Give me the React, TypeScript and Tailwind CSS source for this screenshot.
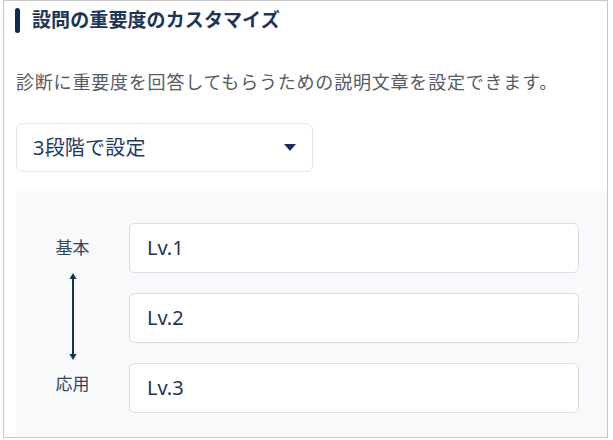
import React from "react";

const font = { fontFamily: '"Noto Sans", "Noto Sans CJK JP", sans-serif' };

function Field({ label }: { label: string }) {
  return (
    <div className="h-[50px] rounded-[6px] border border-[#d9dde3] bg-white flex items-center pl-[17px] text-[20px] text-[#1e3356]">
      {label}
    </div>
  );
}

export default function App() {
  return (
    <div className="w-[613px] h-[440px] bg-white pl-[3px]" style={font}>
      <div className="w-[605px] h-[438px] border border-[#c8c8c8] pl-[12px] flex flex-col">
        <div className="flex items-center mt-[6px] h-[26px]">
          <div className="w-[5px] h-[25px] rounded-full bg-[#0f2a55] -ml-[1px]" />
          <div className="ml-[12px] text-[19px] font-bold text-[#1d3557] tracking-[0.1px] leading-none">
            設問の重要度のカスタマイズ
          </div>
        </div>
        <div className="mt-[40px] text-[18px] text-[#555b63] tracking-[0.8px] leading-none">
          診断に重要度を回答してもらうための説明文章を設定できます。
        </div>
        <div className="mt-[32px] w-[297px] h-[49px] rounded-[7px] border border-[#e3e7ec] bg-white flex items-center justify-between pl-[16px] pr-[16px]">
          <span className="text-[20px] text-[#1d3a66] tracking-[0.2px]">3段階で設定</span>
          <svg width="12" height="7" viewBox="0 0 12 7">
            <path d="M0 0 H12 L6 7 Z" fill="#12305c" />
          </svg>
        </div>
        <div className="mt-[19px] flex-1 bg-[#f8f9fb] flex items-start pt-[32px] pr-[28px]">
          <div className="w-[113px] flex flex-col items-center text-[17px] text-[#33455c]">
            <div className="h-[50px] flex items-center">基本</div>
            <svg width="8" height="87" viewBox="0 0 8 87" className="block">
              <path d="M4 0 L7.5 6 H0.5 Z" fill="#13305a" />
              <path d="M4 87 L7.5 81 H0.5 Z" fill="#13305a" />
              <rect x="3" y="4" width="2" height="79" fill="#13305a" />
            </svg>
            <div className="h-[48px] flex items-center">応用</div>
          </div>
          <div className="flex-1 flex flex-col gap-[20px]">
            <Field label="Lv.1" />
            <Field label="Lv.2" />
            <Field label="Lv.3" />
          </div>
        </div>
      </div>
    </div>
  );
}
